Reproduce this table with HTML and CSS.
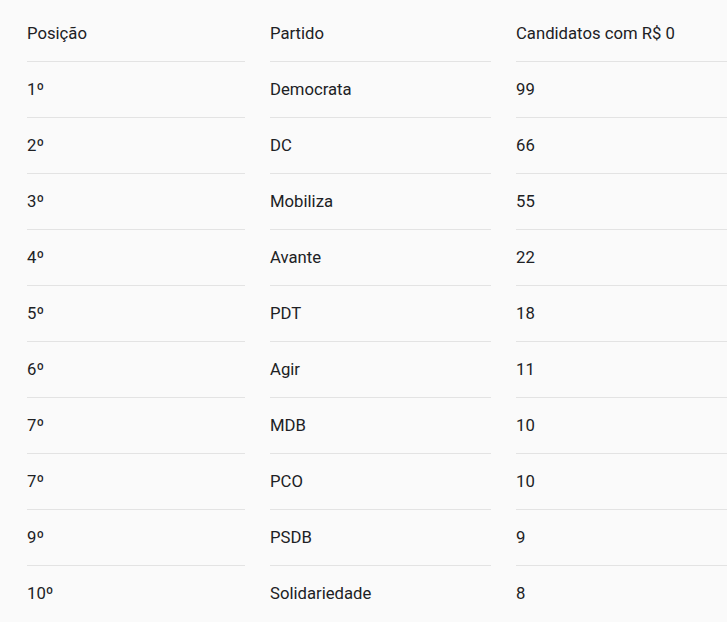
FILE: index.html
```html
<!DOCTYPE html>
<html lang="pt">
<head>
<meta charset="utf-8">
<link rel="stylesheet" href="styles.css">
</head>
<body>
<div class="table">
  <div class="row head"><div class="cell">Posição</div><div class="cell">Partido</div><div class="cell">Candidatos com R$ 0</div></div>
  <div class="row"><div class="cell">1º</div><div class="cell">Democrata</div><div class="cell">99</div></div>
  <div class="row"><div class="cell">2º</div><div class="cell">DC</div><div class="cell">66</div></div>
  <div class="row"><div class="cell">3º</div><div class="cell">Mobiliza</div><div class="cell">55</div></div>
  <div class="row"><div class="cell">4º</div><div class="cell">Avante</div><div class="cell">22</div></div>
  <div class="row"><div class="cell">5º</div><div class="cell">PDT</div><div class="cell">18</div></div>
  <div class="row"><div class="cell">6º</div><div class="cell">Agir</div><div class="cell">11</div></div>
  <div class="row"><div class="cell">7º</div><div class="cell">MDB</div><div class="cell">10</div></div>
  <div class="row"><div class="cell">7º</div><div class="cell">PCO</div><div class="cell">10</div></div>
  <div class="row"><div class="cell">9º</div><div class="cell">PSDB</div><div class="cell">9</div></div>
  <div class="row"><div class="cell">10º</div><div class="cell">Solidariedade</div><div class="cell">8</div></div>
</div>
</body>
</html>
```
FILE: styles.css
```css
html, body {
  margin: 0;
  padding: 0;
  background: #fafafa;
  overflow: hidden;
}
body {
  font-family: Roboto, "Noto Sans", sans-serif;
  font-size: 16.7px;
  color: #202124;
}
.table {
  padding: 6px 0 0 27px;
}
.row {
  display: grid;
  grid-template-columns: 218px 221px 211px;
  column-gap: 25px;
}
.cell {
  height: 55px;
  display: flex;
  align-items: center;
  border-bottom: 1px solid #e3e3e3;
  white-space: nowrap;
}
.row:last-child .cell {
  border-bottom-color: transparent;
}
```
